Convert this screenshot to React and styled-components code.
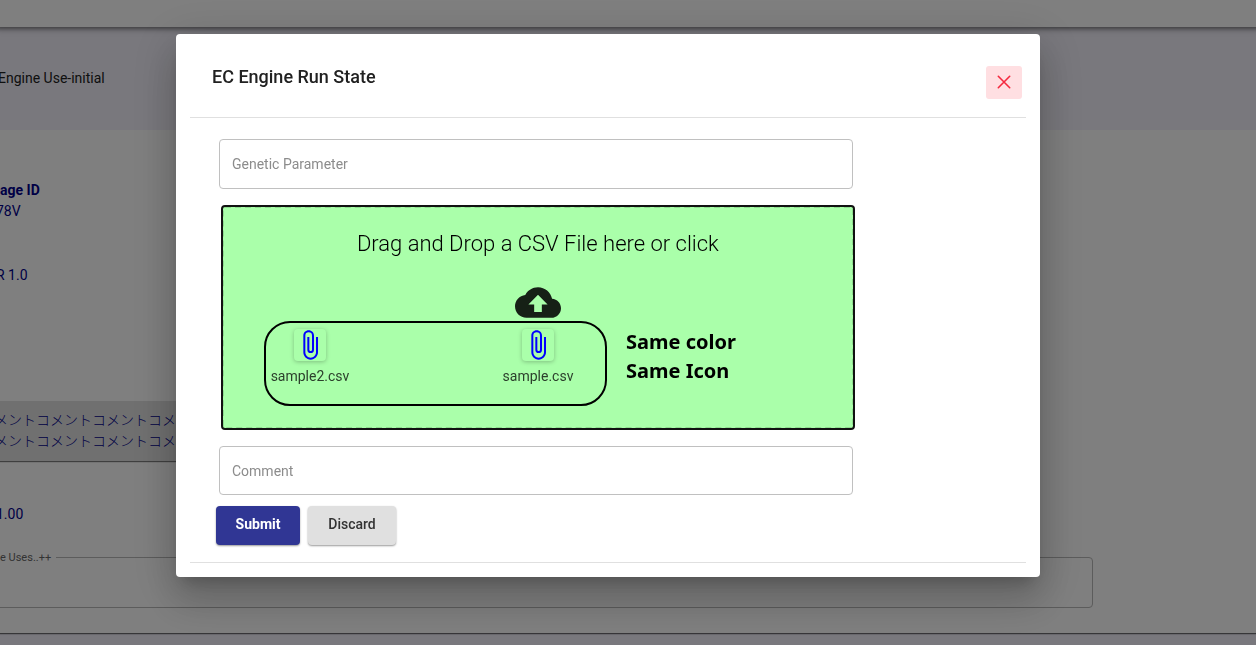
import { useState } from "react";
import styled, { createGlobalStyle } from "styled-components";
import { MdAttachFile } from "react-icons/md";

const GlobalStyle = createGlobalStyle`
    * {
        box-sizing: border-box;
    }

    body {
        margin: 0;
        overflow: hidden;
        background: #f3f1fb;
        font-family: Roboto, "Noto Sans CJK JP", sans-serif;
        font-size: 14px;
        line-height: 21px;
        color: #212121;
    }
`;

const Page = styled.div`
    display: flex;
    flex-direction: column;
    min-height: 100vh;
`;

const TopBar = styled.header`
    height: 27px;
    background: #fff;
    box-shadow: 0 -2px 4px 4px rgba(0, 0, 0, 0.4), 0 -1px 8px 4px rgba(0, 0, 0, 0.15);
    z-index: 1;
`;

const Banner = styled.div`
    display: flex;
    align-items: center;
    height: 103px;
    margin-left: -2px;
`;

const Card = styled.main`
    display: flex;
    flex-direction: column;
    padding: 50px 163px 25px 0;
    background: #fff;
    box-shadow: 0 1px 1px 0 rgba(0, 0, 0, 0.5), 0 0 2px 1px rgba(0, 0, 0, 0.15);
    clip-path: inset(0 0 -4px 0);
    color: #00008b;
`;

const Detail = styled.div`
    display: flex;
    flex-direction: column;
    margin: 0 0 ${({ $space }) => $space}px -4px;
`;

const DetailLabel = styled.strong`
    margin-left: 4px;
    font-weight: 700;
`;

const CommentBlock = styled.div`
    width: 60%;
    height: 60px;
    margin-bottom: 43px;
    padding: 9px 0;
    overflow: hidden;
    background: #e0e0e0;
    box-shadow: 0 1px 1px rgba(0, 0, 0, 0.5);

    p {
        margin: 0 0 0 -6px;
        font-weight: 300;
        white-space: nowrap;
    }
`;

const UsesBox = styled.fieldset`
    height: 57px;
    margin: 0 0 0 -12px;
    padding: 0 6px;
    border: 1px solid #b8b8b8;
    border-radius: 4px;

    legend {
        height: 13px;
        padding: 0 5px;
        font-size: 11px;
        line-height: 14px;
        color: #666;
    }
`;

const Overlay = styled.div`
    position: fixed;
    inset: 0;
    z-index: 10;
    display: flex;
    justify-content: center;
    align-items: flex-start;
    padding: 34px 40px 0 0;
    background: rgba(0, 0, 0, 0.5);
`;

const Dialog = styled.section`
    width: 100%;
    max-width: 864px;
    padding: 0 14px 14px;
    background: #fff;
    border-radius: 4px;
    box-shadow: 0 11px 15px -7px rgba(0, 0, 0, 0.2),
        0 24px 38px 3px rgba(0, 0, 0, 0.14),
        0 9px 46px 8px rgba(0, 0, 0, 0.12);
`;

const DialogHeader = styled.header`
    display: flex;
    justify-content: space-between;
    align-items: flex-start;
    height: 84px;
    padding: 32px 4px 0 22px;
    border-bottom: 1px solid #e0e0e0;
`;

const DialogTitle = styled.h2`
    margin: 0;
    font-size: 18px;
    font-weight: 500;
    line-height: 22px;
`;

const CloseButton = styled.button`
    display: flex;
    justify-content: center;
    align-items: center;
    width: 36px;
    height: 33px;
    padding: 0 0 1px;
    background: #ffdfe2;
    border: none;
    border-radius: 3px;
    color: #f5293f;
    cursor: pointer;
`;

const Form = styled.form`
    display: flex;
    flex-direction: column;
    gap: 16px;
    width: 80%;
    padding: 21px 6px 17px 29px;
`;

const TextField = styled.input`
    width: 100%;
    height: ${({ $height }) => $height}px;
    padding: 0 12px;
    border: 1px solid #c0c0c0;
    border-radius: 4px;
    font: inherit;

    &::placeholder {
        color: #8c8c8c;
        opacity: 1;
    }
`;

const DropZone = styled.div`
    display: flex;
    flex-direction: column;
    align-items: center;
    height: 223px;
    margin: 1px -1px 1px 3px;
    padding-top: 23px;
    border: 2px dashed #8ddb8d;
    border-radius: 3px;
    outline: 2px solid #111;
    outline-offset: -1px;
    background: #aaffaa;
`;

const DropTitle = styled.p`
    margin: 0 0 30px;
    font-size: 22px;
    font-weight: 300;
    line-height: 26px;
    color: #000;
`;

const FileRow = styled.div`
    display: flex;
    align-self: stretch;
    gap: 19px;
    margin-top: 3px;
    padding-left: 40px;
`;

const FileList = styled.ul`
    display: flex;
    justify-content: space-between;
    width: 343px;
    height: 85px;
    margin: 0;
    padding: 6px 23px 0 0;
    border: 2px solid #000;
    border-radius: 26px;
    list-style: none;
`;

const FileItem = styled.li`
    display: flex;
    flex-direction: column;
    align-items: center;
    gap: 5px;
    width: 88px;
    color: #2c402c;
`;

const FileIcon = styled.span`
    display: flex;
    border-radius: 4px;
    box-shadow: 0 1px 4px rgba(0, 0, 0, 0.25);
    color: #0000ff;
`;

const Note = styled.p`
    margin: 0;
    padding-top: 6px;
    font-family: "Noto Sans", sans-serif;
    font-size: 20px;
    font-weight: 700;
    line-height: 29px;
    color: #000;
`;

const Actions = styled.div`
    display: flex;
    gap: 8px;
    margin: -5px 0 0 -3px;
`;

const Button = styled.button`
    width: ${({ $primary }) => ($primary ? 84 : 88)}px;
    height: 39px;
    padding: 0 0 2px;
    background: ${({ $primary }) => ($primary ? "#303694" : "#e0e0e0")};
    border: none;
    border-radius: 4px;
    box-shadow: 0 1px 2px rgba(0, 0, 0, 0.4);
    color: ${({ $primary }) => ($primary ? "#fff" : "#333")};
    font: inherit;
    font-weight: ${({ $primary }) => ($primary ? 700 : 500)};
    cursor: pointer;
`;

const DialogFooter = styled.footer`
    border-top: 1px solid #e0e0e0;
`;

const files = ["sample2.csv", "sample.csv"];

function CloudUpload() {
    return (
        <svg width="46" height="31" viewBox="0 4 24 16" fill="#162016" aria-hidden="true">
            <path d="M19.35 10.04C18.67 6.59 15.64 4 12 4 9.11 4 6.6 5.64 5.35 8.04 2.34 8.36 0 10.91 0 14c0 3.31 2.69 6 6 6h13c2.76 0 5-2.24 5-5 0-2.64-2.05-4.78-4.65-4.96zM14 13v4h-4v-4H7l5-5 5 5h-3z" />
        </svg>
    );
}

function CloseIcon() {
    return (
        <svg width="14" height="14" viewBox="0 0 14 14" fill="none" stroke="currentColor" strokeWidth="1.6" strokeLinecap="round" aria-hidden="true">
            <path d="M1.3 1.3l11.4 11.4M12.7 1.3L1.3 12.7" />
        </svg>
    );
}

function DetailsPage() {
    return (
        <Page>
            <TopBar />
            <Banner>Engine Use-initial</Banner>
            <Card>
                <Detail $space={43}>
                    <DetailLabel>age ID</DetailLabel>
                    <span>78V</span>
                </Detail>
                <Detail $space={115}>R 1.0</Detail>
                <CommentBlock>
                    <p>メントコメントコメントコメントコメントコメント</p>
                    <p>メントコメントコメントコメントコメントコメント</p>
                </CommentBlock>
                <Detail $space={26}>1.00</Detail>
                <UsesBox>
                    <legend>e Uses..++</legend>
                </UsesBox>
            </Card>
        </Page>
    );
}

function RunStateDialog({ onClose }) {
    return (
        <Overlay>
            <Dialog role="dialog" aria-modal="true" aria-labelledby="run-state-title">
                <DialogHeader>
                    <DialogTitle id="run-state-title">EC Engine Run State</DialogTitle>
                    <CloseButton type="button" aria-label="Close" onClick={onClose}>
                        <CloseIcon />
                    </CloseButton>
                </DialogHeader>

                <Form onSubmit={(e) => e.preventDefault()}>
                    <TextField $height={50} name="parameter" aria-label="Genetic Parameter" placeholder="Genetic Parameter" />

                    <DropZone>
                        <DropTitle>Drag and Drop a CSV File here or click</DropTitle>
                        <CloudUpload />
                        <FileRow>
                            <FileList>
                                {files.map((file) => (
                                    <FileItem key={file}>
                                        <FileIcon><MdAttachFile size={32} /></FileIcon>
                                        <span>{file}</span>
                                    </FileItem>
                                ))}
                            </FileList>
                            <Note>Same color<br />Same Icon</Note>
                        </FileRow>
                    </DropZone>

                    <TextField $height={49} name="comment" aria-label="Comment" placeholder="Comment" />

                    <Actions>
                        <Button type="submit" $primary>Submit</Button>
                        <Button type="button" onClick={onClose}>Discard</Button>
                    </Actions>
                </Form>
                <DialogFooter />
            </Dialog>
        </Overlay>
    );
}

function App() {
    const [open, setOpen] = useState(true);

    return (
        <>
            <GlobalStyle />
            <DetailsPage />
            {open && <RunStateDialog onClose={() => setOpen(false)} />}
        </>
    );
}

export default App;
